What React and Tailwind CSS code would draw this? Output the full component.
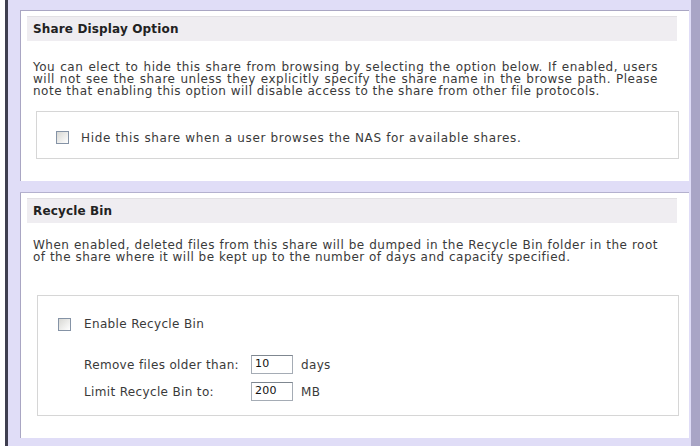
import React from 'react'

const font = { fontFamily: '"DejaVu Sans", Verdana, sans-serif' }

function Checkbox() {
  return (
    <span className="inline-block w-[13px] h-[13px] border border-[#8593a6] bg-gradient-to-br from-[#d8d8d4] to-white shrink-0" />
  )
}

function SectionHeader({ title }) {
  return (
    <div className="ml-[6px] mr-[12px] mt-[5px] h-[25px] flex items-center pl-[6px] bg-[#efedf1] border-t border-[#e2e0e4] text-[12px] tracking-[0.15px] font-bold text-[#222]">
      {title}
    </div>
  )
}

// justified paragraph, one line per entry, last line left aligned
function Para({ lines, className }) {
  return (
    <div className={`ml-[12px] w-[625px] leading-[12px] tracking-[0.5px] ${className}`}>
      {lines.map((line, i) => (
        <span
          key={i}
          className={
            i < lines.length - 1
              ? 'block whitespace-nowrap text-justify [text-align-last:justify]'
              : 'block whitespace-nowrap'
          }
        >
          {line}
        </span>
      ))}
    </div>
  )
}

function NumberField({ value }) {
  return (
    <span className="inline-flex items-center w-[42px] h-[19px] px-[3px] border border-[#a5acb5] border-t-[#7f8790] text-[11px] tracking-[0.3px] text-[#111] bg-white">
      {value}
    </span>
  )
}

export default function App() {
  return (
    <div style={font} className="w-[700px] h-[446px] flex bg-white text-[#3a3a3a] text-[12px] overflow-hidden">
      <div className="w-[5px] bg-white" />
      <div className="w-[3px] bg-[#3f3f50]" />
      <div className="flex-1 flex flex-col bg-[#e0ddf7] pl-[12px] pr-[2px] pt-[10px] pb-[8px]">
        <section className="h-[171px] bg-white border-l border-t border-[#a9a6c3] flex flex-col">
          <SectionHeader title="Share Display Option" />
          <Para
            className="mt-[20px]"
            lines={[
              'You can elect to hide this share from browsing by selecting the option below. If enabled, users',
              'will not see the share unless they explicitly specify the share name in the browse path. Please',
              'note that enabling this option will disable access to the share from other file protocols.',
            ]}
          />
          <div className="ml-[15px] mr-[10px] mt-[14px] h-[48px] border border-[#d6d6d6] flex items-center pt-[5px] pl-[19px] gap-[12px] tracking-[0.65px]">
            <Checkbox />
            <span>Hide this share when a user browses the NAS for available shares.</span>
          </div>
        </section>
        <div className="h-[12px] border-b border-[#b4b1cf]" />
        <section className="flex-1 bg-white border-l border-[#a9a6c3] flex flex-col">
          <SectionHeader title="Recycle Bin" />
          <Para
            className="mt-[16px]"
            lines={[
              'When enabled, deleted files from this share will be dumped in the Recycle Bin folder in the root',
              'of the share where it will be kept up to the number of days and capacity specified.',
            ]}
          />
          <div className="ml-[16px] mr-[10px] mt-[32px] h-[121px] border border-[#d6d6d6] pl-[20px] pt-[19px] tracking-[0.35px]">
            <div className="flex items-center gap-[13px]">
              <Checkbox />
              <span>Enable Recycle Bin</span>
            </div>
            <div className="mt-[22px] pl-[26px] flex flex-col gap-[8px]">
              <div className="flex items-center">
                <span className="w-[167px]">Remove files older than:</span>
                <NumberField value="10" />
                <span className="ml-[8px]">days</span>
              </div>
              <div className="flex items-center">
                <span className="w-[167px]">Limit Recycle Bin to:</span>
                <NumberField value="200" />
                <span className="ml-[8px]">MB</span>
              </div>
            </div>
          </div>
        </section>
      </div>
      <div className="w-[9px] bg-[#a9a5c6]" />
    </div>
  )
}
